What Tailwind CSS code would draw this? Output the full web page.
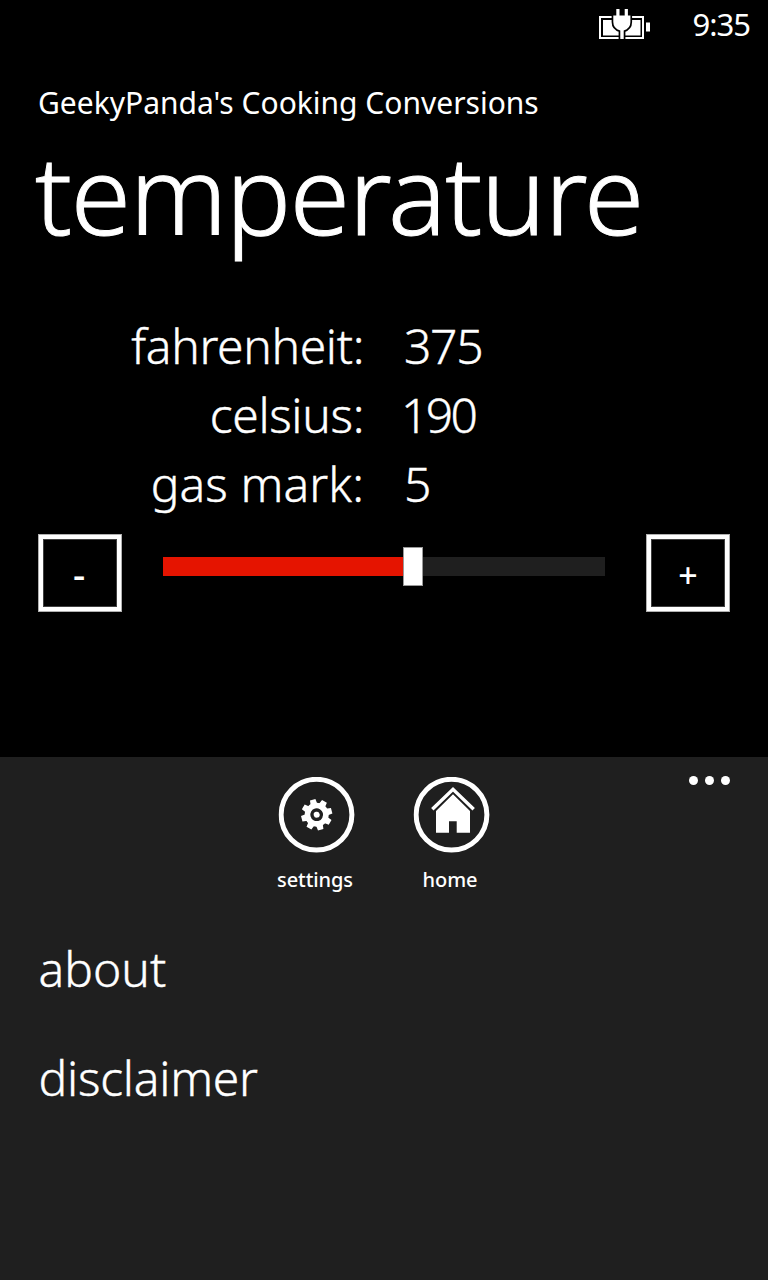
<!DOCTYPE html>
<html lang="en">
<head>
<meta charset="utf-8">
<title>Cooking Conversions</title>
<script src="https://cdn.jsdelivr.net/npm/@tailwindcss/browser@4"></script>
</head>
<body class="bg-black text-white font-['Noto_Sans',sans-serif]">
<div class="flex h-[1280px] w-[768px] flex-col overflow-hidden bg-black">
  <!-- status bar -->
  <header class="flex h-[49px] items-start justify-end pr-[18px]">
    <svg class="mr-[41px] h-[49px] w-[52px]" viewBox="599 0 52 49" fill="none">
      <rect x="600" y="17" width="43" height="21" stroke="#fff" stroke-width="2"/>
      <rect x="603" y="20" width="37.500" height="15.500" fill="#fff"/>
      <rect x="646" y="22.500" width="4" height="9" fill="#fff"/>
      <path id="plug" d="M616.300 9h3.200v6.500h5.200V9h3.200v6.500h2.500V22q0 6.500-6.700 8.500V39h-3.400v-8.500q-7-2-7-8.500V15.500h3z" stroke="#000" stroke-width="3.400"/>
      <path d="M616.300 9h3.200v6.500h5.200V9h3.200v6.500h2.500V22q0 6.500-6.700 8.500V39h-3.400v-8.500q-7-2-7-8.500V15.500h3z" fill="#fff"/>
    </svg>
    <span class="text-[31px] leading-[49px] tracking-[-1px]">9:35</span>
  </header>

  <div class="mt-[33px] h-[40px] pl-[38px] text-[30px] leading-[41px] whitespace-nowrap">GeekyPanda's Cooking Conversions</div>
  <h1 class="h-[142px] pl-[35px] text-[109px] leading-[142px] font-light tracking-[-1.300px] [-webkit-text-stroke:1px_#fff]">temperature</h1>

  <!-- readings -->
  <dl class="mt-[47px] grid grid-cols-[364px_1fr] gap-x-[40px] text-[48px] leading-[69px] font-light [-webkit-text-stroke:0.4px_#fff]">
    <dt class="text-right tracking-[-0.35px]">fahrenheit:</dt><dd class="tracking-[-1.300px]">375</dd>
    <dt class="text-right tracking-[-0.35px]">celsius:</dt><dd class="-ml-[3px] tracking-[-2.700px]">190</dd>
    <dt class="text-right tracking-[0.1px]">gas mark:</dt><dd>5</dd>
  </dl>

  <!-- slider with step buttons -->
  <div class="mt-4 flex h-[78px] items-start px-[38px]">
    <button class="h-[78px] w-[84px] border border-[#b0b0b0]"><span class="flex h-full w-full justify-center border-4 border-white pr-[2px] text-[38px] leading-[70px] font-medium inset-ring inset-ring-[#404040]">-</span></button>
    <div class="mt-[13px] ml-[41px] flex h-[39px] w-[442px] items-center">
      <div class="h-[19px] w-[240px] bg-[#e51400]"></div>
      <div class="h-[39px] w-5 border border-[#999] bg-white"></div>
      <div class="h-[19px] flex-1 bg-[#1f1f1f]"></div>
    </div>
    <button class="ml-[41px] h-[78px] w-[84px] border border-[#b0b0b0]"><span class="flex h-full w-full justify-center border-4 border-white text-[34px] leading-[73px] font-medium inset-ring inset-ring-[#404040]">+</span></button>
  </div>

  <!-- application bar -->
  <footer class="mt-[145px] flex-1 bg-[#1f1f1f]">
    <div class="grid h-[157px] grid-cols-[1fr_auto_1fr] pt-[19px]">
      <div></div>
      <div class="flex gap-[53px] pt-px">
        <div class="flex w-[82px] flex-col items-center">
          <svg class="h-[77px] w-[77px] translate-x-[0.5px]" viewBox="0 0 77 77" fill="none">
            <circle cx="38" cy="37.700" r="35.400" stroke="#fff" stroke-width="5"/>
            <g transform="translate(38.200 37.700) rotate(-15)" fill="#fff">
              <circle r="9.200" stroke="#fff" stroke-width="5.600" fill="none"/>
              <g id="teeth"><path d="M-3.500-10L-2.800-15.500H2.800L3.500-10zM-3.500 10L-2.800 15.500H2.800L3.500 10zM-10-3.500L-15.500-2.800V2.800L-10 3.500zM10-3.500L15.500-2.800V2.800L10 3.500z"/></g>
              <use href="#teeth" transform="rotate(45)"/>
              <circle r="3"/>
            </g>
          </svg>
          <span class="mt-3 pr-[3px] text-[20px] leading-[28px] font-medium tracking-[-0.1px]">settings</span>
        </div>
        <div class="flex w-[82px] flex-col items-center">
          <svg class="h-[77px] w-[77px] translate-x-[0.5px]" viewBox="0 0 77 77" fill="none">
            <circle cx="38" cy="37.700" r="35.400" stroke="#fff" stroke-width="5"/>
            <path d="M18.800 32.300L39.500 12.300L60.200 32.300" stroke="#fff" stroke-width="3.400"/>
            <path d="M22.500 34V55.700H35.500V44.300H43.200V55.700H56.500V34L39.500 17.200z" fill="#fff"/>
          </svg>
          <span class="mt-3 pr-[3px] text-[20px] leading-[28px] font-medium">home</span>
        </div>
      </div>
      <div class="flex justify-end gap-[7px] pr-[38px]">
        <i class="size-[9px] rounded-full bg-white"></i>
        <i class="size-[9px] rounded-full bg-white"></i>
        <i class="size-[9px] rounded-full bg-white"></i>
      </div>
    </div>
    <nav class="pl-[38.500px] text-[48px] leading-[109px] font-light [-webkit-text-stroke:0.4px_#fff]">
      <div>about</div>
      <div class="tracking-[-0.25px]">disclaimer</div>
    </nav>
  </footer>
</div>
</body>
</html>
